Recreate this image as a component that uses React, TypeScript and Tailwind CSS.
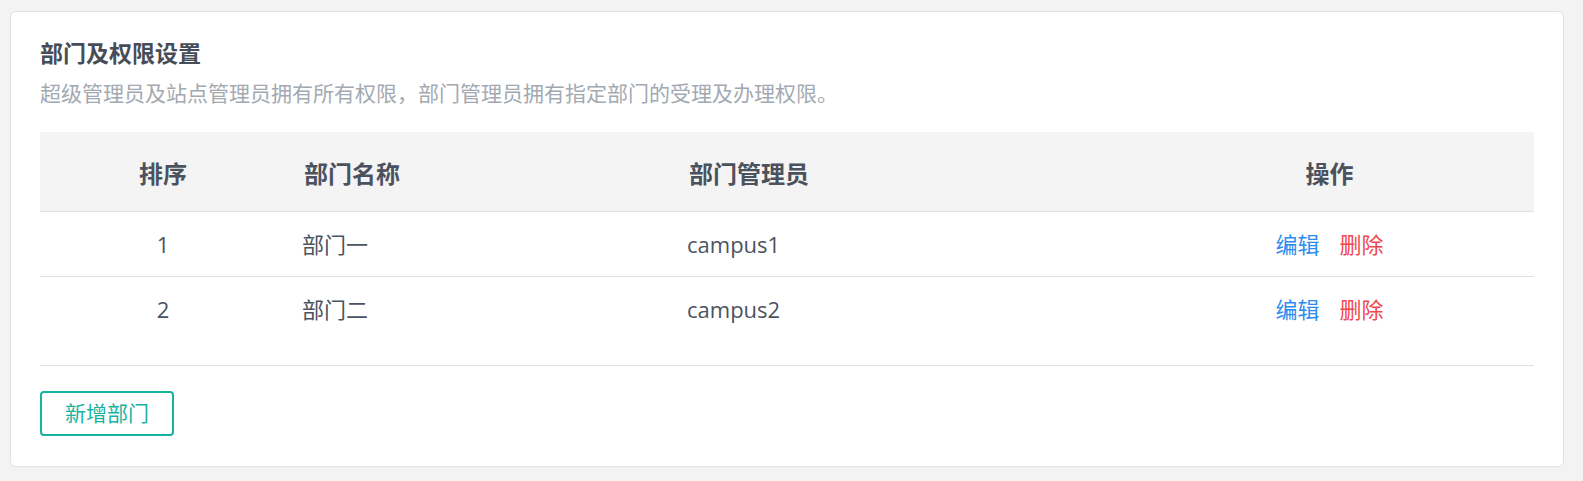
import React from 'react';

interface Dept {
  order: number;
  name: string;
  admin: string;
}

const depts: Dept[] = [
  { order: 1, name: '部门一', admin: 'campus1' },
  { order: 2, name: '部门二', admin: 'campus2' },
];

const cols = 'grid grid-cols-[246px_385px_454px_1fr]';

export default function App() {
  return (
    <div
      className="min-h-[481px] w-full bg-[#f3f3f3] pt-[11px] pl-[10px]"
      style={{ fontFamily: '"Open Sans", "Noto Sans CJK SC", sans-serif' }}
    >
      <div className="w-[1554px] h-[456px] rounded-md border border-[#e2e2e2] bg-white px-[29px] pt-[25px]">
        {/* Header */}
        <h2 className="text-[23px] leading-[32px] font-bold text-[#474d58]">部门及权限设置</h2>
        <p className="mt-[9px] text-[21px] leading-[30px] text-[#a3a9b1]">
          超级管理员及站点管理员拥有所有权限，部门管理员拥有指定部门的受理及办理权限。
        </p>

        {/* Table */}
        <div className="mt-[24px]">
          <div className={`${cols} h-[80px] items-center bg-[#f4f4f4] border-b border-[#e1e1e1] text-[24px] font-bold text-[#4b525e] pt-[4px]`}>
            <div className="text-center">排序</div>
            <div className="pl-[18px]">部门名称</div>
            <div className="pl-[18px]">部门管理员</div>
            <div className="text-center">操作</div>
          </div>
          {depts.map((d, i) => (
            <div
              key={d.order}
              className={`${cols} h-[65px] items-center text-[22px] text-[#4c5360] ${
                i < depts.length - 1 ? 'border-b border-[#e1e1e1]' : ''
              }`}
            >
              <div className="text-center">{d.order}</div>
              <div className="pl-[16px]">{d.name}</div>
              <div className="pl-[16px]">{d.admin}</div>
              <div className="flex justify-center gap-[20px]">
                <button type="button" className="text-[#2d8cf0]">编辑</button>
                <button type="button" className="text-[#f0474d]">删除</button>
              </div>
            </div>
          ))}
        </div>

        {/* Footer */}
        <div className="mt-[23px] border-t border-[#e1e1e1] pt-[25px]">
          <button
            type="button"
            className="w-[134px] h-[45px] rounded-[4px] border-2 border-[#17b3a0] text-[21px] text-[#17b3a0] flex items-center justify-center"
          >
            新增部门
          </button>
        </div>
      </div>
    </div>
  );
}
